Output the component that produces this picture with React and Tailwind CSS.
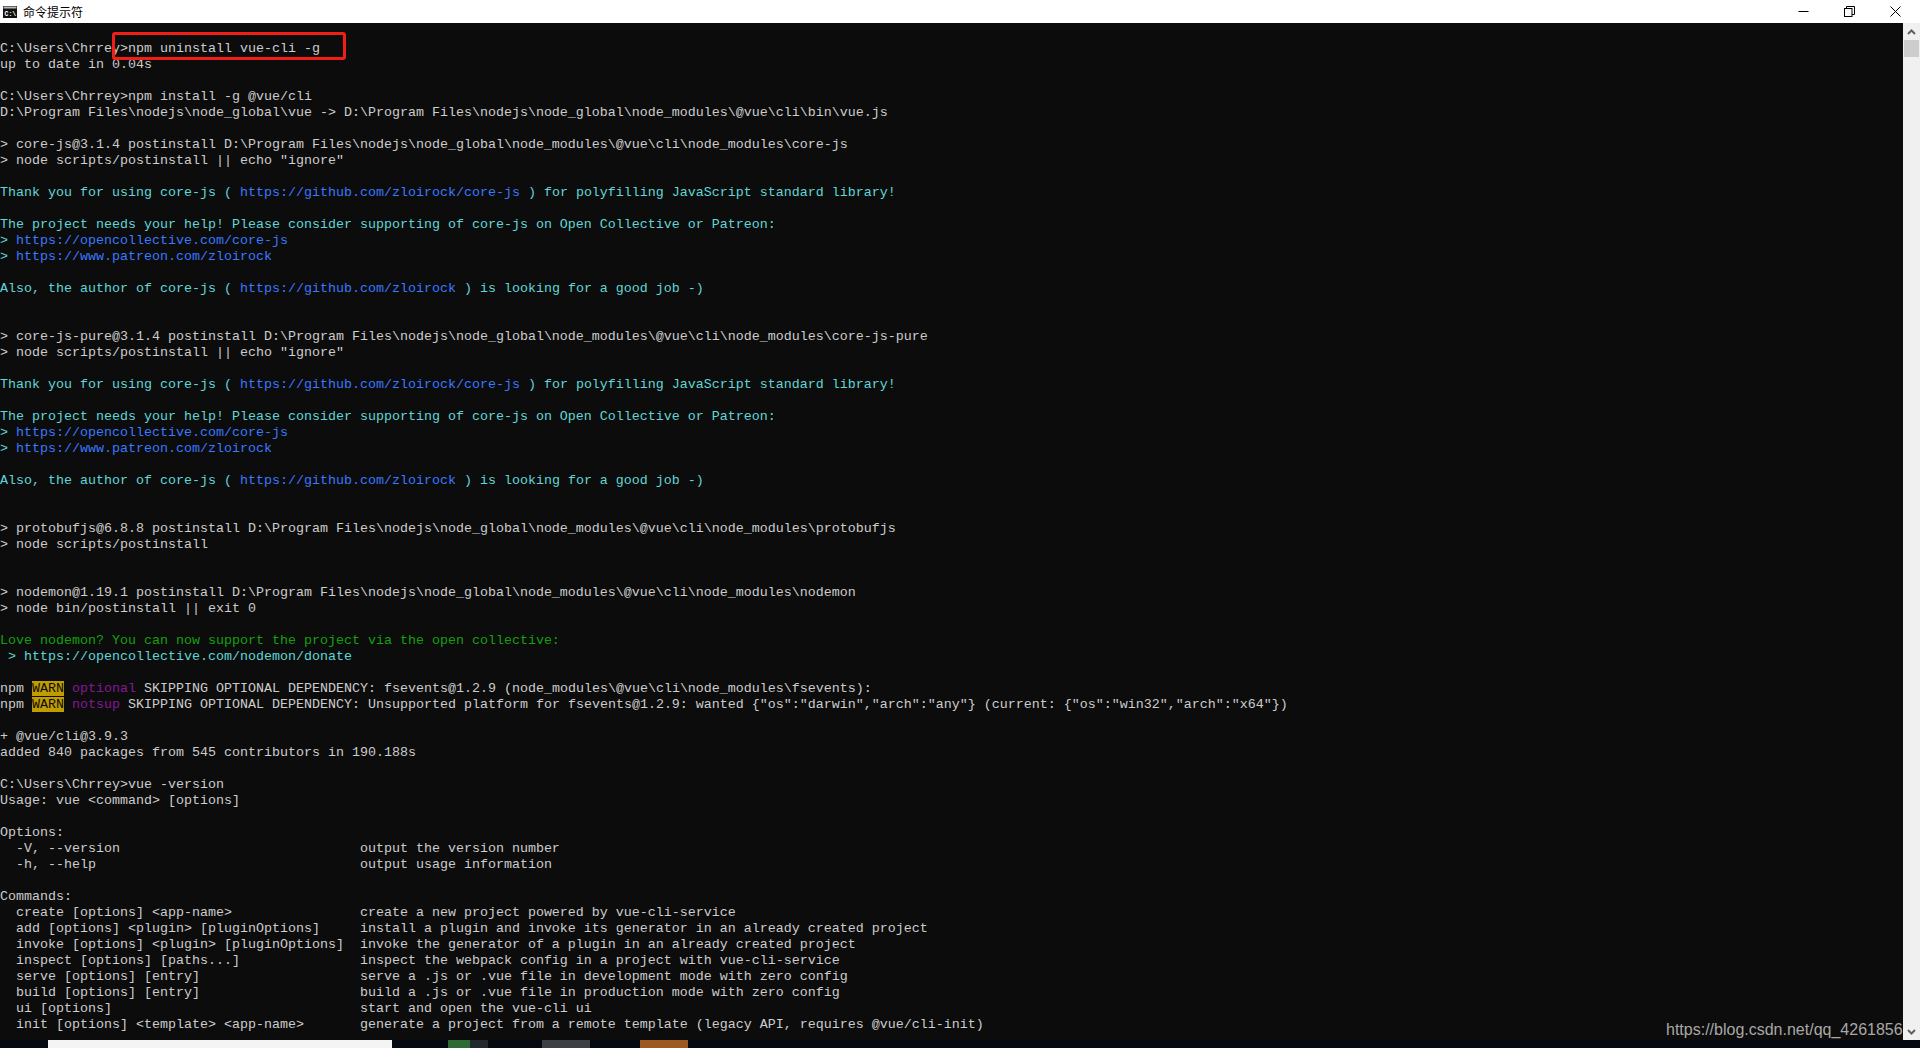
import React from "react";

const TEAL = "text-[#61d6d6]";
const BLUE = "text-[#3b78ff]";
const GREEN = "text-[#13a10e]";
const PURPLE = "text-[#881798]";
const WARN = "bg-[#c19c00] text-[#0c0c0c]";

const PROMPT = "C:\\Users\\Chrrey>";
const GLOBAL = "D:\\Program Files\\nodejs\\node_global\\node_modules\\@vue\\cli\\node_modules\\";

const coreJsHelp = [
  [["Thank you for using core-js ( ", TEAL], ["https://github.com/zloirock/core-js", BLUE], [" ) for polyfilling JavaScript standard library!", TEAL]],
  "",
  [["The project needs your help! Please consider supporting of core-js on Open Collective or Patreon:", TEAL]],
  [["> ", TEAL], ["https://opencollective.com/core-js", BLUE]],
  [["> ", TEAL], ["https://www.patreon.com/zloirock", BLUE]],
  "",
  [["Also, the author of core-js ( ", TEAL], ["https://github.com/zloirock", BLUE], [" ) is looking for a good job -)", TEAL]],
];

// one entry per console row, a string or a list of [text, colour] pieces
const LINES = [
  "",
  PROMPT + "npm uninstall vue-cli -g",
  "up to date in 0.04s",
  "",
  PROMPT + "npm install -g @vue/cli",
  "D:\\Program Files\\nodejs\\node_global\\vue -> D:\\Program Files\\nodejs\\node_global\\node_modules\\@vue\\cli\\bin\\vue.js",
  "",
  "> core-js@3.1.4 postinstall " + GLOBAL + "core-js",
  '> node scripts/postinstall || echo "ignore"',
  "",
  ...coreJsHelp,
  "",
  "",
  "> core-js-pure@3.1.4 postinstall " + GLOBAL + "core-js-pure",
  '> node scripts/postinstall || echo "ignore"',
  "",
  ...coreJsHelp,
  "",
  "",
  "> protobufjs@6.8.8 postinstall " + GLOBAL + "protobufjs",
  "> node scripts/postinstall",
  "",
  "",
  "> nodemon@1.19.1 postinstall " + GLOBAL + "nodemon",
  "> node bin/postinstall || exit 0",
  "",
  [["Love nodemon? You can now support the project via the open collective:", GREEN]],
  [[" > https://opencollective.com/nodemon/donate", TEAL]],
  "",
  [["npm "], ["WARN", WARN], [" "], ["optional", PURPLE], [" SKIPPING OPTIONAL DEPENDENCY: fsevents@1.2.9 (node_modules\\@vue\\cli\\node_modules\\fsevents):"]],
  [["npm "], ["WARN", WARN], [" "], ["notsup", PURPLE], [' SKIPPING OPTIONAL DEPENDENCY: Unsupported platform for fsevents@1.2.9: wanted {"os":"darwin","arch":"any"} (current: {"os":"win32","arch":"x64"})']],
  "",
  "+ @vue/cli@3.9.3",
  "added 840 packages from 545 contributors in 190.188s",
  "",
  PROMPT + "vue -version",
  "Usage: vue <command> [options]",
  "",
  "Options:",
  "  -V, --version                              output the version number",
  "  -h, --help                                 output usage information",
  "",
  "Commands:",
  "  create [options] <app-name>                create a new project powered by vue-cli-service",
  "  add [options] <plugin> [pluginOptions]     install a plugin and invoke its generator in an already created project",
  "  invoke [options] <plugin> [pluginOptions]  invoke the generator of a plugin in an already created project",
  "  inspect [options] [paths...]               inspect the webpack config in a project with vue-cli-service",
  "  serve [options] [entry]                    serve a .js or .vue file in development mode with zero config",
  "  build [options] [entry]                    build a .js or .vue file in production mode with zero config",
  "  ui [options]                               start and open the vue-cli ui",
  "  init [options] <template> <app-name>       generate a project from a remote template (legacy API, requires @vue/cli-init)",
];

const ConsoleLine = ({ line }) => (
  <div className="h-4 leading-4 whitespace-pre">
    {typeof line === "string"
      ? line
      : line.map(([text, color], i) => (
          <span key={i} className={color}>
            {text}
          </span>
        ))}
  </div>
);

const TitleBar = () => (
  <div className="h-[23px] bg-white flex items-center justify-between pr-[2px] shrink-0">
    <div className="flex items-center">
      <svg className="ml-[3px] mr-[6px]" width="14" height="12" viewBox="0 0 14 12">
        <rect width="14" height="12" fill="#111" />
        <rect x="0.5" y="0.5" width="13" height="2" fill="#bbb" />
        <text x="1.5" y="9.5" fontSize="6.5" fontWeight="700" fill="#fff" fontFamily="'Liberation Mono', monospace">C:\</text>
      </svg>
      <span className="text-xs text-black font-['Noto_Sans_CJK_SC',sans-serif]">命令提示符</span>
    </div>
    <div className="flex">
      <div className="w-[46px] h-[23px] flex items-center justify-center">
        <svg width="11" height="11" viewBox="0 0 11 11"><path d="M0.5 5.5h10" stroke="#000" strokeWidth="1" /></svg>
      </div>
      <div className="w-[46px] h-[23px] flex items-center justify-center">
        <svg width="11" height="11" viewBox="0 0 11 11" fill="none" stroke="#000" strokeWidth="1">
          <rect x="0.5" y="2.5" width="7.5" height="8" />
          <path d="M2.5 2.5V0.5h8v8H8" />
        </svg>
      </div>
      <div className="w-[46px] h-[23px] flex items-center justify-center">
        <svg width="11" height="11" viewBox="0 0 11 11"><path d="M0.5 0.5l10 10M10.5 0.5l-10 10" stroke="#000" strokeWidth="1" /></svg>
      </div>
    </div>
  </div>
);

const ScrollBar = () => (
  <div className="w-[17px] bg-[#f0f0f0] flex flex-col items-center shrink-0">
    <div className="h-[17px] w-full flex items-center justify-center">
      <svg width="9" height="6" viewBox="0 0 9 6"><path d="M1 5l3.5-3.5L8 5" fill="none" stroke="#606060" strokeWidth="2" /></svg>
    </div>
    <div className="h-[17px] w-[15px] bg-[#cdcdcd]" />
    <div className="flex-1" />
    <div className="h-[17px] w-full flex items-center justify-center">
      <svg width="9" height="6" viewBox="0 0 9 6"><path d="M1 1l3.5 3.5L8 1" fill="none" stroke="#606060" strokeWidth="2" /></svg>
    </div>
  </div>
);

const TaskBar = () => (
  <div className="h-2 bg-[#040a10] flex overflow-hidden shrink-0">
    <div className="ml-[48px] w-[344px] bg-[#f4f4f4]" />
    <div className="ml-[56px] w-[22px] bg-[#2f6a33]" />
    <div className="w-[18px] bg-[#22282c]" />
    <div className="ml-[54px] w-[48px] bg-[#3c4044]" />
    <div className="ml-[50px] w-[48px] bg-[#9a5a22]" />
    <span className="ml-auto mr-[70px] text-xs leading-4 pt-[5px] text-white font-['Liberation_Sans',sans-serif]">10:35</span>
  </div>
);

export default function App() {
  return (
    <div className="h-[1048px] flex flex-col overflow-hidden bg-[#0c0c0c]">
      <TitleBar />
      <div className="flex-1 flex min-h-0">
        <div className="relative flex-1 overflow-hidden bg-[#0c0c0c] pt-[2px] text-[#cccccc] text-[13.33px] font-['Liberation_Mono',monospace]">
          {LINES.map((line, i) => (
            <ConsoleLine key={i} line={line} />
          ))}
          {/* annotation drawn on the screenshot */}
          <div className="absolute left-[112px] top-[9px] w-[234px] h-[28px] border-[3px] border-[#f01e14] rounded-[3px]" />
          {/* blog watermark */}
          <div className="absolute left-[1666px] top-[997px] whitespace-nowrap text-base leading-5 text-[#a8a8a8] font-['Liberation_Sans',sans-serif]">
            https://blog.csdn.net/qq_42618566
          </div>
        </div>
        <ScrollBar />
      </div>
      <TaskBar />
    </div>
  );
}
